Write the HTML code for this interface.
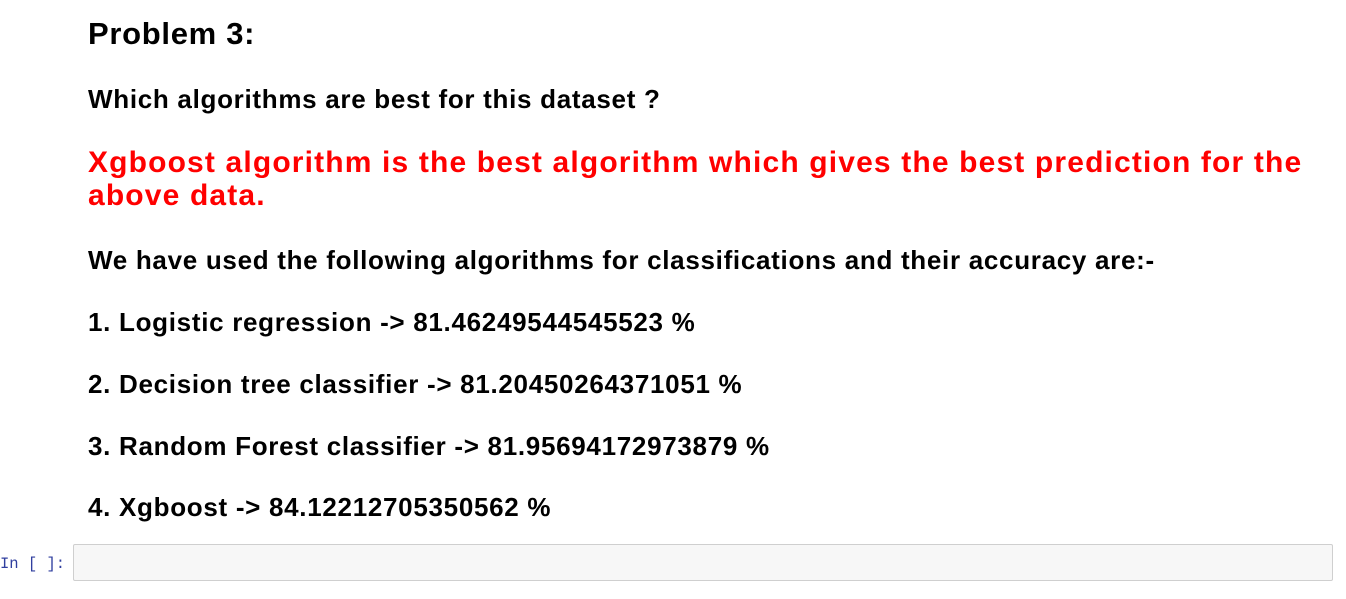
<!DOCTYPE html>
<html><head><meta charset="utf-8"><style>
body{margin:0;width:1346px;height:599px;background:#fff;font-family:"Liberation Sans",Arial,sans-serif;position:relative;overflow:hidden}
.t{position:absolute;left:88px;font-weight:bold;color:#000;white-space:nowrap;margin:0;letter-spacing:0.7px}
.h{font-size:26px}
.red{color:#f00;font-size:30px;line-height:33px;letter-spacing:1.15px}
.prompt{position:absolute;left:0;top:555px;font-family:"Liberation Mono",monospace;font-size:15.5px;color:#303f9f}
.cell{position:absolute;left:73px;top:544px;width:1258px;height:35px;background:#f7f7f7;border:1px solid #cfcfcf;border-radius:2px}
</style></head><body>
<div class="t" style="top:16px;font-size:31px">Problem 3:</div>
<div class="t h" style="top:84px">Which algorithms are best for this dataset ?</div>
<div class="t red" style="top:146px">Xgboost algorithm is the best algorithm which gives the best prediction for the<br>above data.</div>
<div class="t h" style="top:245px">We have used the following algorithms for classifications and their accuracy are:-</div>
<div class="t h" style="top:307px">1. Logistic regression -&gt; 81.46249544545523 %</div>
<div class="t h" style="top:369px">2. Decision tree classifier -&gt; 81.20450264371051 %</div>
<div class="t h" style="top:431px">3. Random Forest classifier -&gt; 81.95694172973879 %</div>
<div class="t h" style="top:492px">4. Xgboost -&gt; 84.12212705350562 %</div>
<div class="prompt">In&nbsp;[&nbsp;]:</div>
<div class="cell"></div>
</body></html>
